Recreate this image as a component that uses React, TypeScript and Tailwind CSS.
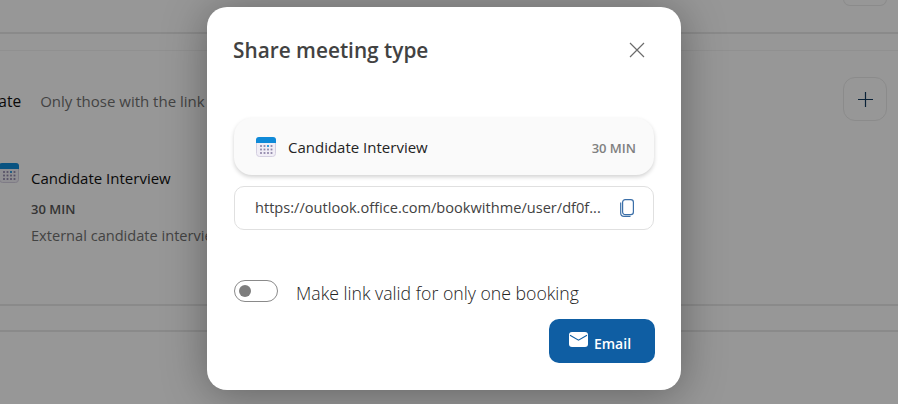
const font = { fontFamily: '"Open Sans", "Noto Sans", sans-serif' };

function CalendarIcon({ className }: { className?: string }) {
  return (
    <svg viewBox="0 0 20 20" className={className}>
      <rect x="0.5" y="0.5" width="19" height="19" rx="3" fill="#f1eef6" stroke="#d4cfe0" />
      <path d="M0 6V3a3 3 0 0 1 3-3h14a3 3 0 0 1 3 3v3z" fill="#0f8ad8" />
      {[5, 8.5, 12, 15.5].map((x) =>
        [9, 12.5, 16].map((y) => (
          <rect
            key={`${x}-${y}`}
            x={x - 0.9}
            y={y - 0.9}
            width="1.8"
            height="1.8"
            fill={x === 12 && y === 9 ? "#0f8ad8" : "#8d84a8"}
          />
        ))
      )}
    </svg>
  );
}

function PageBehind() {
  return (
    <div className="h-full bg-[#fcfcfc] text-[#111]">
      <div className="h-[34px] border-b-2 border-[#e6e6e6] flex justify-end pr-[11px]">
        <div className="w-[44px] h-[7px] -mt-px border border-t-0 border-[#e8e8e8] rounded-b-lg" />
      </div>
      <div className="h-[17px] border-b border-[#f0f0f0]" />
      <div className="h-[87px] flex items-start justify-between pr-[11px]">
        <div className="-ml-[29px] mt-[39px] flex items-baseline gap-[19px] text-[15.5px] whitespace-nowrap">
          <span className="font-medium">Private</span>
          <span className="text-[15px] text-[#707070]">Only those with the link can book</span>
        </div>
        <div className="mt-[26px] w-[44px] h-[44px] border border-[#e8e8e8] rounded-xl flex items-center justify-center">
          <svg width="15" height="15" viewBox="0 0 15 15" stroke="#113a5e" strokeWidth="1.2">
            <path d="M7.5 0v15M0 7.5h15" />
          </svg>
        </div>
      </div>
      <div className="h-[168px] border-b-2 border-[#e6e6e6] -ml-[1px]">
        <div className="flex items-start gap-[12px] pt-[25px]">
          <CalendarIcon className="w-[20px] h-[20px] shrink-0" />
          <span className="mt-[5px] text-[15px] font-medium leading-[20px]">Candidate Interview</span>
        </div>
        <div className="pl-[32px] mt-[13px] text-[13px] font-semibold text-[#585858] leading-[16px]">30 MIN</div>
        <div className="pl-[32px] mt-[8px] text-[14.6px] text-[#707070] leading-[20px] whitespace-nowrap">
          External candidate interview
        </div>
      </div>
      <div className="h-[26px] border-b-2 border-[#e6e6e6]" />
    </div>
  );
}

function ShareDialog() {
  return (
    <div className="w-[474px] h-[383px] bg-white rounded-[20px] shadow-[0_4px_44px_rgba(0,0,0,0.35)] flex flex-col px-[27px]">
      <div className="flex items-center justify-between h-[86px] pr-[9px]">
        <h2 className="-ml-px text-[20.8px] font-semibold text-[#424242] leading-none">Share meeting type</h2>
        <svg width="16" height="16" viewBox="0 0 16 16" stroke="#6b6b6b" strokeWidth="1.2">
          <path d="M1 1l14 14M15 1L1 15" />
        </svg>
      </div>
      <div className="mt-[25px] h-[57px] rounded-[18px] bg-[#fafafa] shadow-[0_2px_4px_rgba(0,0,0,0.18)] flex items-center pl-[22px] pr-[18px]">
        <CalendarIcon className="w-[20px] h-[20px] shrink-0" />
        <span className="ml-[12px] mt-[2px] text-[15px] font-medium text-[#242424]">Candidate Interview</span>
        <span className="ml-auto mt-[4px] text-[13px] font-semibold text-[#808080]">30 MIN</span>
      </div>
      <div className="mt-[11px] h-[44px] rounded-[10px] border border-[#e0e0e0] flex items-center pl-[20px] pr-[19px]">
        <span className="text-[14.6px] text-[#424242] whitespace-nowrap">
          https://outlook.office.com/bookwithme/user/df0f...
        </span>
        <svg className="ml-auto" width="14" height="18" viewBox="0 0 14 18" fill="none" stroke="#3b6fa8" strokeWidth="1.2">
          <rect x="2.6" y="0.6" width="10.8" height="15" rx="2.6" />
          <path d="M0.7 3.5v10.6a3.3 3.3 0 0 0 3.3 3.3h6.5" />
        </svg>
      </div>
      <div className="mt-[50px] flex items-start">
        <div className="w-[44px] h-[22px] rounded-full border border-[#8a8a8a] flex items-center pl-[4px]">
          <div className="w-[12px] h-[12px] rounded-full bg-[#7d7d7d]" />
        </div>
        <span className="ml-[18px] mt-[2px] text-[17.7px] leading-[22px] font-light text-[#242424] whitespace-nowrap">
          Make link valid for only one booking
        </span>
      </div>
      <div className="mt-[15px] -mr-px flex justify-end">
        <button className="w-[106px] h-[44px] rounded-[10px] bg-[#0f5ea3] text-white text-[14px] font-semibold flex items-center justify-center gap-[6px] pr-[4px]">
          <svg width="19" height="15" viewBox="0 0 19 15" className="-mt-[3px]">
            <rect width="19" height="15" rx="3" fill="#fff" />
            <path d="M1 3.2l8.5 5 8.5-5" fill="none" stroke="#0f5ea3" strokeWidth="1.1" />
          </svg>
          <span className="mt-[4px]">Email</span>
        </button>
      </div>
    </div>
  );
}

export default function App() {
  return (
    <div className="relative w-[898px] h-[404px] overflow-hidden" style={font}>
      <PageBehind />
      <div className="absolute inset-0 bg-black/40 pl-[207px] pt-[7px]">
        <ShareDialog />
      </div>
    </div>
  );
}
